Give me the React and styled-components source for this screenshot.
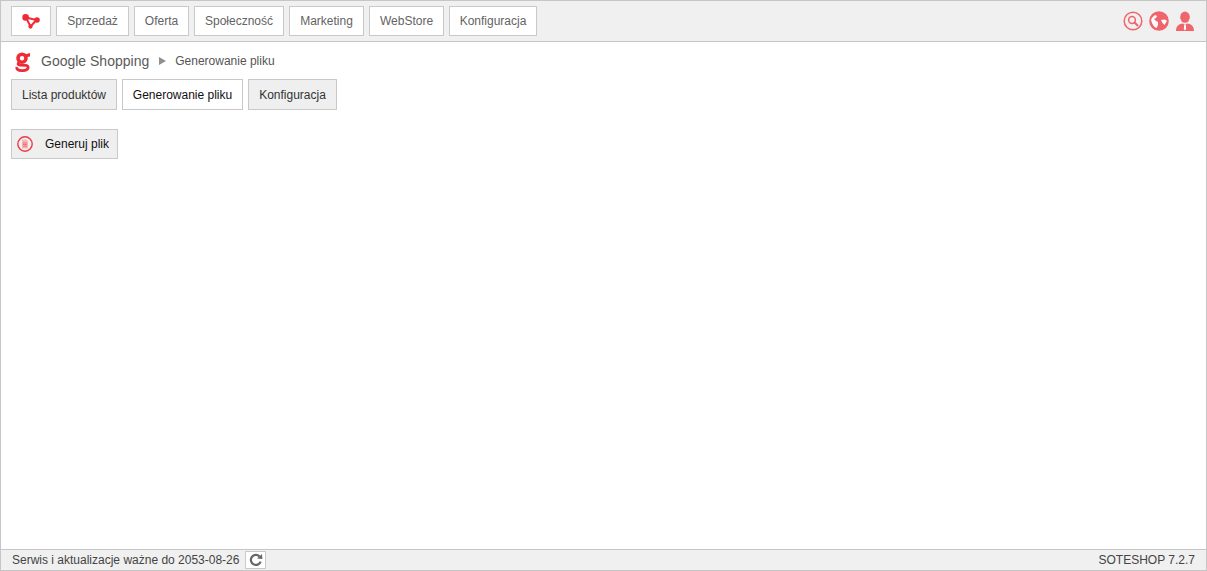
import React from "react";
import styled, { createGlobalStyle } from "styled-components";

const GlobalStyle = createGlobalStyle`
  html, body {
    margin: 0;
    padding: 0;
    background: #ffffff;
  }
  body {
    font-family: "Liberation Sans", Arial, sans-serif;
    font-size: 12px;
    color: #555555;
  }
`;

const Page = styled.div`
  box-sizing: border-box;
  width: 1207px;
  height: 571px;
  border: 1px solid #c6c6c6;
  display: flex;
  flex-direction: column;
  overflow: hidden;
`;

const TopBar = styled.div`
  box-sizing: border-box;
  height: 41px;
  flex: none;
  display: flex;
  align-items: center;
  justify-content: space-between;
  padding: 0 10px;
  background: #f0f0f0;
  border-bottom: 1px solid #c6c6c6;
`;

const Menu = styled.div`
  display: flex;
  gap: 5px;
`;

const MenuButton = styled.div`
  box-sizing: border-box;
  height: 30px;
  width: ${(p) => p.$width}px;
  display: flex;
  align-items: center;
  justify-content: center;
  background: #ffffff;
  border: 1px solid #c9c9c9;
  color: #636363;
  font-size: 12px;
`;

const TopIcons = styled.div`
  display: flex;
  align-items: center;
  gap: 6px;
  margin-right: 1px;
`;

const Content = styled.div`
  flex: 1;
  padding: 0 10px;
  display: flex;
  flex-direction: column;
  align-items: flex-start;
`;

const Crumbs = styled.div`
  height: 37px;
  display: flex;
  align-items: center;
`;

const LogoG = styled.svg`
  width: 16px;
  height: 20px;
  margin: 2px 10px 0 4px;
  flex: none;
`;

const CrumbTitle = styled.span`
  font-size: 14px;
  color: #5a5a5a;
`;

const CrumbArrow = styled.span`
  width: 0;
  height: 0;
  margin: 1px 9px 0 10px;
  border-left: 7px solid #8f8f8f;
  border-top: 4px solid transparent;
  border-bottom: 4px solid transparent;
`;

const CrumbCurrent = styled.span`
  font-size: 12px;
  color: #555555;
`;

const Tabs = styled.div`
  display: flex;
  gap: 5px;
`;

const Tab = styled.div`
  box-sizing: border-box;
  height: 31px;
  width: ${(p) => p.$width}px;
  display: flex;
  align-items: center;
  justify-content: center;
  background: ${(p) => (p.$active ? "#ffffff" : "#efefef")};
  border: 1px solid #c9c9c9;
  color: ${(p) => (p.$active ? "#111111" : "#333333")};
  font-size: 12px;
`;

const ActionButton = styled.div`
  box-sizing: border-box;
  margin-top: 19px;
  height: 30px;
  width: 107px;
  display: flex;
  align-items: center;
  padding-left: 5px;
  background: #efefef;
  border: 1px solid #c9c9c9;
  color: #111111;
  font-size: 12px;
`;

const ActionIcon = styled.svg`
  width: 16px;
  height: 16px;
  margin-right: 12px;
  flex: none;
`;

const Footer = styled.div`
  box-sizing: border-box;
  height: 21px;
  flex: none;
  display: flex;
  align-items: center;
  justify-content: space-between;
  padding: 0 11px 0 11px;
  background: #f0f0f0;
  border-top: 1px solid #c6c6c6;
  color: #444444;
  font-size: 12px;
`;

const FooterLeft = styled.div`
  display: flex;
  align-items: center;
  gap: 6px;
`;

const RefreshButton = styled.div`
  box-sizing: border-box;
  width: 21px;
  height: 18px;
  display: flex;
  align-items: center;
  justify-content: center;
  background: #ffffff;
  border: 1px solid #c9c9c9;
`;

const menuItems = [
  ["Sprzedaż", 73],
  ["Oferta", 55],
  ["Społeczność", 90],
  ["Marketing", 75],
  ["WebStore", 75],
  ["Konfiguracja", 88],
];

const tabs = [
  ["Lista produktów", 106, false],
  ["Generowanie pliku", 121, true],
  ["Konfiguracja", 89, false],
];

const NetworkIcon = () => (
  <svg width="18" height="15" viewBox="0 0 18 15">
    <path d="M4 3.5 L14.5 6 L8.5 12.5 Z" fill="none" stroke="#ee2c36" strokeWidth="2" />
    <circle cx="3.6" cy="3.4" r="3.3" fill="#ee2c36" />
    <circle cx="15" cy="6" r="2.8" fill="#ee2c36" />
    <circle cx="8.5" cy="12.6" r="2.1" fill="#ee2c36" />
  </svg>
);

const LogoIcon = () => (
  <LogoG viewBox="0 0 16 20">
    <ellipse cx="7" cy="6.2" rx="4" ry="4" fill="none" stroke="#ee2c36" strokeWidth="3.6" />
    <path d="M9 2.8 L15 1 V4.4 L11 5.2 Z" fill="#ee2c36" />
    <path
      d="M5 10 C2.4 11 2.4 13 5.4 13.2 L11 13.4 C14.2 13.8 14.2 18.4 8 18.6 C3.4 18.8 1.2 17.4 2 15"
      fill="none"
      stroke="#ee2c36"
      strokeWidth="2.8"
    />
  </LogoG>
);

const SearchIcon = () => (
  <svg width="20" height="20" viewBox="0 0 20 20">
    <circle cx="10" cy="10" r="8.8" fill="none" stroke="#f0646c" strokeWidth="1.5" />
    <circle cx="9" cy="9" r="3.4" fill="none" stroke="#f0646c" strokeWidth="1.5" />
    <path d="M11.6 11.6 L14.6 14.4" stroke="#f0646c" strokeWidth="2" strokeLinecap="round" />
  </svg>
);

const GlobeIcon = () => (
  <svg width="20" height="20" viewBox="0 0 20 20">
    <circle cx="10" cy="10" r="9.8" fill="#f0646c" />
    <path
      d="M2 9 C3 6 5 5 6 4 L8 5 L7 7 L5 8 L7 10 L9 11 L9 14 L7.5 17 C5 16 3 13 2 9 Z"
      fill="#ffffff"
    />
    <path d="M12 9 L16 8.5 L18 10 L15.5 14 L13.5 12 Z" fill="#ffffff" />
  </svg>
);

const UserIcon = () => (
  <svg width="20" height="21" viewBox="0 0 20 21">
    <ellipse cx="10" cy="6.2" rx="4.8" ry="5.6" fill="#f0646c" />
    <path d="M1 20 C1 15 4 13 8 12.6 L10 14 L12 12.6 C16 13 19 15 19 20 Z" fill="#f0646c" />
    <path d="M9.2 14 L10.8 14 L11.2 18 L10 19.4 L8.8 18 Z" fill="#ffffff" />
  </svg>
);

const FileCircleIcon = () => (
  <ActionIcon viewBox="0 0 16 16">
    <circle cx="8" cy="8" r="7.2" fill="none" stroke="#ee3b44" strokeWidth="1.4" />
    <path d="M5 3.6 H9.4 L11 5.2 V12.4 H5 Z" fill="#f6b6b9" />
    <path d="M6 7 H10 M6 8.6 H10 M6 10.2 H10" stroke="#e8606a" strokeWidth="0.8" />
  </ActionIcon>
);

const RefreshIcon = () => (
  <svg width="14" height="14" viewBox="0 0 14 14">
    <path
      d="M11.6 8.6 A5 5 0 1 1 10.4 3.4"
      fill="none"
      stroke="#666666"
      strokeWidth="2.2"
    />
    <path d="M8 5.6 L13.4 6 L13 1 Z" fill="#666666" />
  </svg>
);

export default function App() {
  return (
    <>
      <GlobalStyle />
      <Page>
        <TopBar>
          <Menu>
            <MenuButton $width={40}>
              <NetworkIcon />
            </MenuButton>
            {menuItems.map(([label, width]) => (
              <MenuButton key={label} $width={width}>
                {label}
              </MenuButton>
            ))}
          </Menu>
          <TopIcons>
            <SearchIcon />
            <GlobeIcon />
            <UserIcon />
          </TopIcons>
        </TopBar>
        <Content>
          <Crumbs>
            <LogoIcon />
            <CrumbTitle>Google Shopping</CrumbTitle>
            <CrumbArrow />
            <CrumbCurrent>Generowanie pliku</CrumbCurrent>
          </Crumbs>
          <Tabs>
            {tabs.map(([label, width, active]) => (
              <Tab key={label} $width={width} $active={active}>
                {label}
              </Tab>
            ))}
          </Tabs>
          <ActionButton>
            <FileCircleIcon />
            Generuj plik
          </ActionButton>
        </Content>
        <Footer>
          <FooterLeft>
            <span>Serwis i aktualizacje ważne do 2053-08-26</span>
            <RefreshButton>
              <RefreshIcon />
            </RefreshButton>
          </FooterLeft>
          <span>SOTESHOP 7.2.7</span>
        </Footer>
      </Page>
    </>
  );
}
